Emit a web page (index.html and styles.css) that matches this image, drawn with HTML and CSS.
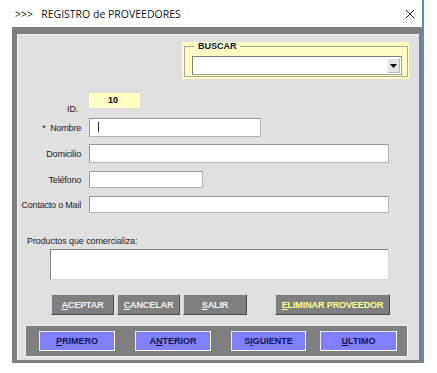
FILE: index.html
```html
<!DOCTYPE html>
<html lang="es">
<head>
  <meta charset="UTF-8">
  <title>Registro de Proveedores</title>
  <link rel="stylesheet" href="styles.css">
</head>
<body>
  <div class="window">
    <div class="titlebar">
      <span class="title">&gt;&gt;&gt;&nbsp;&nbsp;&nbsp;REGISTRO de PROVEEDORES</span>
      <svg class="close" width="10" height="10" viewBox="0 0 10 10">
        <path d="M1 1 L9 9 M9 1 L1 9" stroke="#222" stroke-width="1" fill="none"/>
      </svg>
    </div>

    <div class="frame">
      <div class="panel">
        <div class="search">
          <fieldset class="group">
            <legend>BUSCAR</legend>
            <div class="combo">
              <span class="combo-btn">
                <svg width="7" height="4" viewBox="0 0 7 4"><path d="M0 0 H7 L3.5 4 Z" fill="#000"/></svg>
              </span>
            </div>
          </fieldset>
        </div>

        <div class="form">
          <div class="row row-id">
            <label class="lbl lbl-id">ID.</label>
            <div class="idbox">10</div>
          </div>
          <div class="row row-nombre">
            <label class="lbl">*&nbsp; Nombre</label>
            <div class="field field-short"><span class="caret"></span></div>
          </div>
          <div class="row row-dom">
            <label class="lbl">Domicilio</label>
            <div class="field field-wide"></div>
          </div>
          <div class="row row-tel">
            <label class="lbl">Teléfono</label>
            <div class="field field-tel"></div>
          </div>
          <div class="row row-mail">
            <label class="lbl">Contacto o Mail</label>
            <div class="field field-wide"></div>
          </div>
        </div>

        <div class="productos">
          <div class="lbl-prod">Productos que comercializa:</div>
          <div class="memo"></div>
        </div>

        <div class="actions">
          <button class="btn btn-ok"><u>A</u>CEPTAR</button>
          <button class="btn btn-cancel"><u>C</u>ANCELAR</button>
          <button class="btn btn-exit"><u>S</u>ALIR</button>
          <button class="btn btn-del"><u>E</u>LIMINAR PROVEEDOR</button>
        </div>

        <div class="nav">
          <button class="nbtn"><u>P</u>RIMERO</button>
          <button class="nbtn">A<u>N</u>TERIOR</button>
          <button class="nbtn">S<u>I</u>GUIENTE</button>
          <button class="nbtn"><u>U</u>LTIMO</button>
        </div>
      </div>
    </div>
  </div>
</body>
</html>
```

FILE: styles.css
```css
* {
  box-sizing: border-box;
  margin: 0;
  padding: 0;
}

body {
  background: #fff;
  font-family: 'Liberation Sans', Arial, sans-serif;
  color: #000;
}

.window {
  width: 424px;
  height: 363px;
  border-right: 2px solid #5b8cc0;
  display: flex;
  flex-direction: column;
}

.titlebar {
  height: 27px;
  display: flex;
  align-items: center;
  justify-content: space-between;
  padding: 0 7px 0 15px;
}

.title {
  font-family: 'Open Sans', 'Noto Sans', sans-serif;
  font-size: 10.5px;
  color: #111;
}

.frame {
  flex: 1;
  margin-left: 12px;
  background: #7f7f7f;
  padding: 7px 3px 3px 5px;
}

.panel {
  height: 100%;
  background: #e0e0e0;
  border-top: 1px solid #f4f4f4;
  border-left: 1px solid #f4f4f4;
  padding-top: 7px;
  display: flex;
  flex-direction: column;
}

/* buscar */
.search {
  margin-left: 164px;
  width: 227px;
  height: 37px;
  background: #ffffc4;
  padding: 0 1px 0 2px;
}

.group {
  height: 35px;
  border: 1px solid #a9a9a0;
  padding: 0 5px 3px 7px;
}

.group legend {
  font-size: 9px;
  font-weight: bold;
  color: #101040;
  padding: 0 3px;
  margin-left: 3px;
  line-height: 9px;
}

.combo {
  height: 19px;
  margin-top: 5px;
  background: #fff;
  border: 1px solid #a0a0a0;
  border-top-color: #808080;
  border-left-color: #808080;
  display: flex;
  justify-content: flex-end;
  padding: 1px;
}

.combo-btn {
  width: 13px;
  background: #e4e4e4;
  border: 1px solid #b8b8b8;
  border-top-color: #fff;
  border-left-color: #fff;
  display: flex;
  align-items: center;
  justify-content: center;
}

.combo-btn svg {
  display: block;
}

/* formulario */
.form {
  margin-top: 14px;
  display: flex;
  flex-direction: column;
}

.row {
  display: grid;
  grid-template-columns: 63px 1fr;
  column-gap: 8px;
  align-items: center;
}

.lbl {
  font-size: 9px;
  letter-spacing: -0.2px;
  text-align: right;
  color: #1c1c1c;
  white-space: nowrap;
}

.lbl-id {
  align-self: end;
  margin-bottom: -6px;
  padding-right: 3px;
}

.idbox {
  width: 51px;
  height: 15px;
  background: #ffffc4;
  font-size: 9px;
  font-weight: bold;
  padding: 2px 0 0 19px;
}

.row-nombre { margin-top: 10px; }
.row-dom { margin-top: 7px; }
.row-tel { margin-top: 8px; }
.row-mail { margin-top: 8px; }

.field {
  height: 19px;
  background: #fff;
  border: 1px solid #b4b4b4;
  border-top-color: #9a9a9a;
  border-left-color: #9a9a9a;
  padding: 3px 8px;
}

.row-tel .field,
.row-mail .field {
  height: 17px;
}

.field-short { width: 172px; }
.field-wide { width: 300px; }
.field-tel { width: 114px; }

.caret {
  display: block;
  width: 1px;
  height: 10px;
  background: #333;
}

/* productos */
.productos {
  margin-top: 23px;
  padding-left: 9px;
}

.lbl-prod {
  font-size: 9px;
  letter-spacing: -0.1px;
  color: #1c1c1c;
}

.memo {
  margin: 3px 0 0 23px;
  width: 339px;
  height: 31px;
  background: #fff;
  border: 1px solid #dadada;
  border-top-color: #808080;
  border-left-color: #808080;
}

/* botones */
.actions {
  margin-top: 14px;
  padding-left: 33px;
  display: flex;
  gap: 3px;
}

.btn {
  height: 21px;
  width: 63px;
  background: #7f7f7f;
  color: #f4f4f4;
  font-family: 'Liberation Sans', Arial, sans-serif;
  font-size: 9px;
  font-weight: bold;
  letter-spacing: -0.1px;
  border: 1px solid #4a4a4a;
  border-top-color: #d8d8d8;
  border-left-color: #d8d8d8;
}

.btn-exit { width: 64px; }

.btn-del {
  width: 115px;
  margin-left: 25px;
  color: #ffff90;
}

.nav {
  margin: 10px 0 0 7px;
  width: 383px;
  height: 32px;
  background: #7f7f7f;
  border: 1px solid #f0f0f0;
  display: flex;
  align-items: center;
  padding-left: 13px;
}

.nbtn {
  height: 20px;
  width: 76px;
  background: #8080ff;
  color: #141450;
  font-family: 'Liberation Sans', Arial, sans-serif;
  font-size: 9px;
  font-weight: bold;
  border: 1px solid #e8e8f8;
  border-right-color: #fff;
  border-bottom-color: #fff;
}

.nbtn + .nbtn { margin-left: 20px; }
.nbtn:nth-child(3) { margin-left: 20px; width: 75px; }
.nbtn:nth-child(4) { margin-left: 14px; width: 77px; }
```
